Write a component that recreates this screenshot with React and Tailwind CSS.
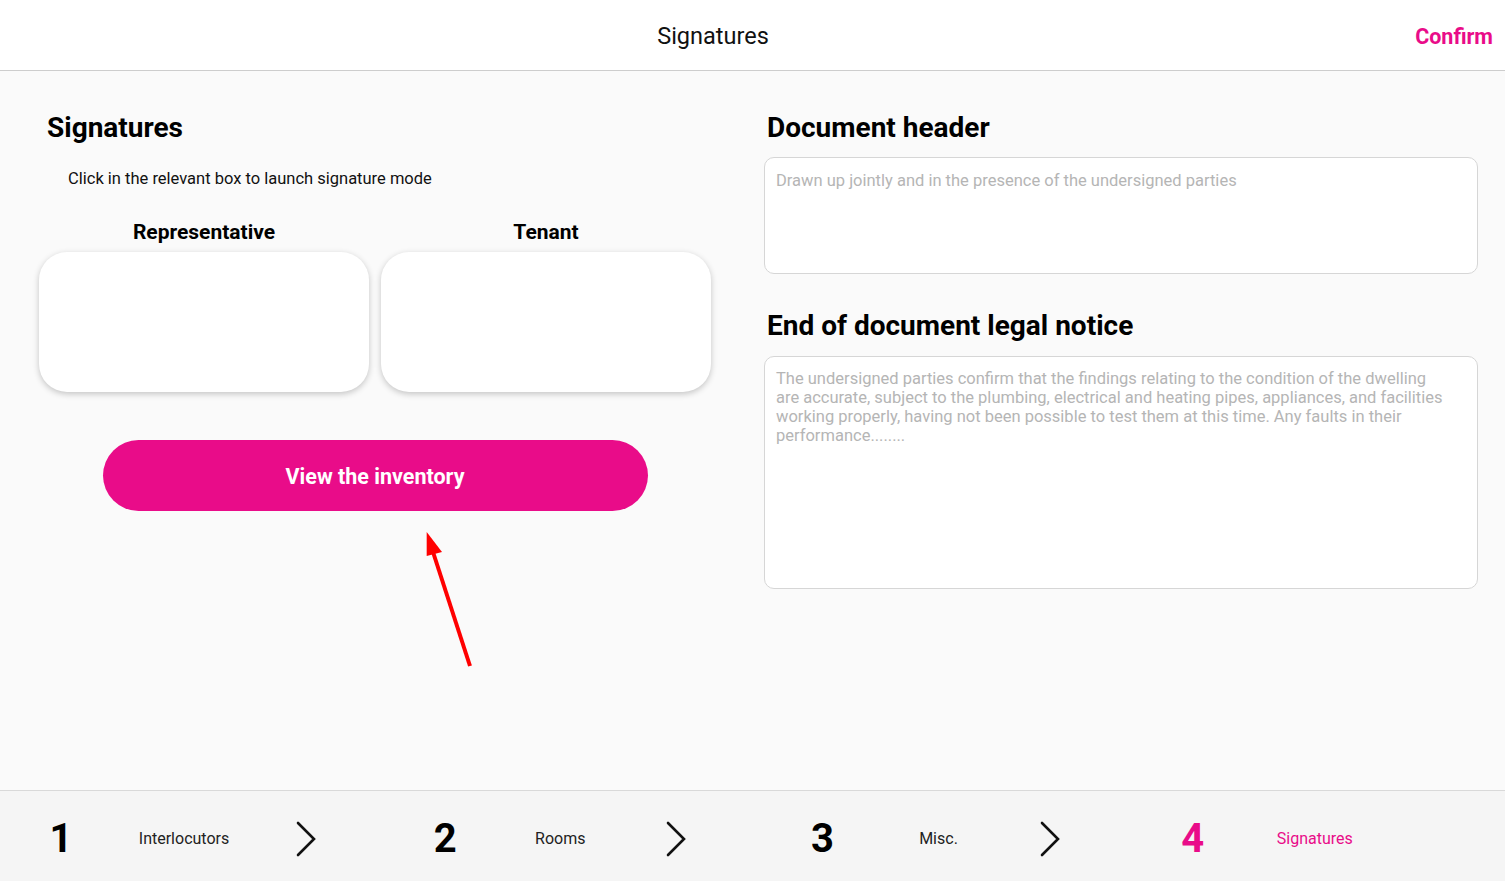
import React from 'react';

const PINK = 'text-[#e90c89]';

const Chevron = () => (
    <svg width="20" height="36" viewBox="0 0 20 36" fill="none">
        <polyline points="2,2 18,18 2,34" stroke="#111" strokeWidth="2.6" strokeLinecap="round" strokeLinejoin="miter" />
    </svg>
);

const Step = ({ num, label, active, last, cols }) => (
    <div className={`flex-1 grid items-center ${cols}`}>
        <span className={`text-center text-[40px] font-bold leading-none ${active ? PINK : 'text-black'}`}>{num}</span>
        <span className={`text-center text-base whitespace-nowrap ${active ? PINK : 'text-[#222]'}`}>{label}</span>
        <span className="flex justify-center">{!last && <Chevron />}</span>
    </div>
);

const SignatureBox = () => (
    <div className="h-[140px] rounded-[28px] bg-white shadow-[0_2px_6px_rgba(0,0,0,0.22)]" />
);

export default function App() {
    return (
        <div className="relative w-full h-[881px] flex flex-col font-['Roboto',sans-serif] text-black">
            {/* Top bar */}
            <header className="h-[71px] shrink-0 bg-white border-b border-[#cdcdcd] relative flex items-center justify-center pr-[79px] pt-[3px]">
                <h1 className="text-[23.5px] text-[#111]">Signatures</h1>
                <button className={`absolute right-[12px] top-[21px] text-[21.5px] font-bold ${PINK}`}>Confirm</button>
            </header>

            {/* Main */}
            <main className="flex-1 bg-[#fafafa] flex">
                <section className="w-[750px] shrink-0 px-[39px]">
                    <h2 className="mt-[40px] pl-2 text-[28px] leading-[34px] font-bold">Signatures</h2>
                    <p className="mt-[24px] pl-[29px] text-[16.5px] leading-5 text-[#111]">
                        Click in the relevant box to launch signature mode
                    </p>
                    <div className="mt-[31px] grid grid-cols-2 gap-x-3">
                        <span className="text-center text-[21px] leading-6 font-bold">Representative</span>
                        <span className="text-center text-[21px] leading-6 font-bold">Tenant</span>
                    </div>
                    <div className="mt-2 grid grid-cols-2 gap-x-3">
                        <SignatureBox />
                        <SignatureBox />
                    </div>
                    <button className="mt-12 mx-auto flex items-center justify-center w-[545px] h-[71px] pt-[3px] rounded-full bg-[#e90c89] text-white text-[21.5px] font-bold">
                        View the inventory
                    </button>
                </section>

                <section className="flex-1 ml-[14px] pr-[27px]">
                    <h2 className="mt-[40px] pl-[3px] text-[28px] leading-[34px] font-bold">Document header</h2>
                    <div className="mt-3 h-[117px] rounded-[10px] border border-[#d6d6d6] bg-white pl-[11px] pr-[31px] pt-[13px] text-[16.5px] leading-[19px] text-[#b5b5b5]">
                        Drawn up jointly and in the presence of the undersigned parties
                    </div>
                    <h2 className="mt-[35px] pl-[3px] text-[28px] leading-[34px] font-bold">End of document legal notice</h2>
                    <div className="mt-[13px] h-[233px] rounded-[10px] border border-[#d6d6d6] bg-white pl-[11px] pr-[31px] pt-[12px] text-[16.5px] leading-[19px] text-[#b5b5b5]">
                        The undersigned parties confirm that the findings relating to the condition of the dwelling are accurate, subject to the plumbing, electrical and heating pipes, appliances, and facilities working properly, having not been possible to test them at this time. Any faults in their performance........
                    </div>
                </section>
            </main>

            {/* Step bar */}
            <footer className="h-[91px] shrink-0 bg-[#f5f5f5] border-t border-[#d9d9d9] flex items-center pt-[5px]">
                <Step num="1" label="Interlocutors" cols="grid-cols-[122px_124px_120px]" />
                <Step num="2" label="Rooms" cols="grid-cols-[138px_92px_140px]" />
                <Step num="3" label="Misc." cols="grid-cols-[140px_92px_131px]" />
                <Step num="4" label="Signatures" cols="grid-cols-[128px_116px_110px]" active last />
            </footer>

            {/* Annotation arrow */}
            <svg className="absolute left-[400px] top-[520px]" width="100" height="160" viewBox="0 0 100 160">
                <line x1="70" y1="146" x2="33" y2="32" stroke="#ff0000" strokeWidth="4" />
                <polygon points="26.7,12 26.7,36 42,32" fill="#ff0000" />
            </svg>
        </div>
    );
}
